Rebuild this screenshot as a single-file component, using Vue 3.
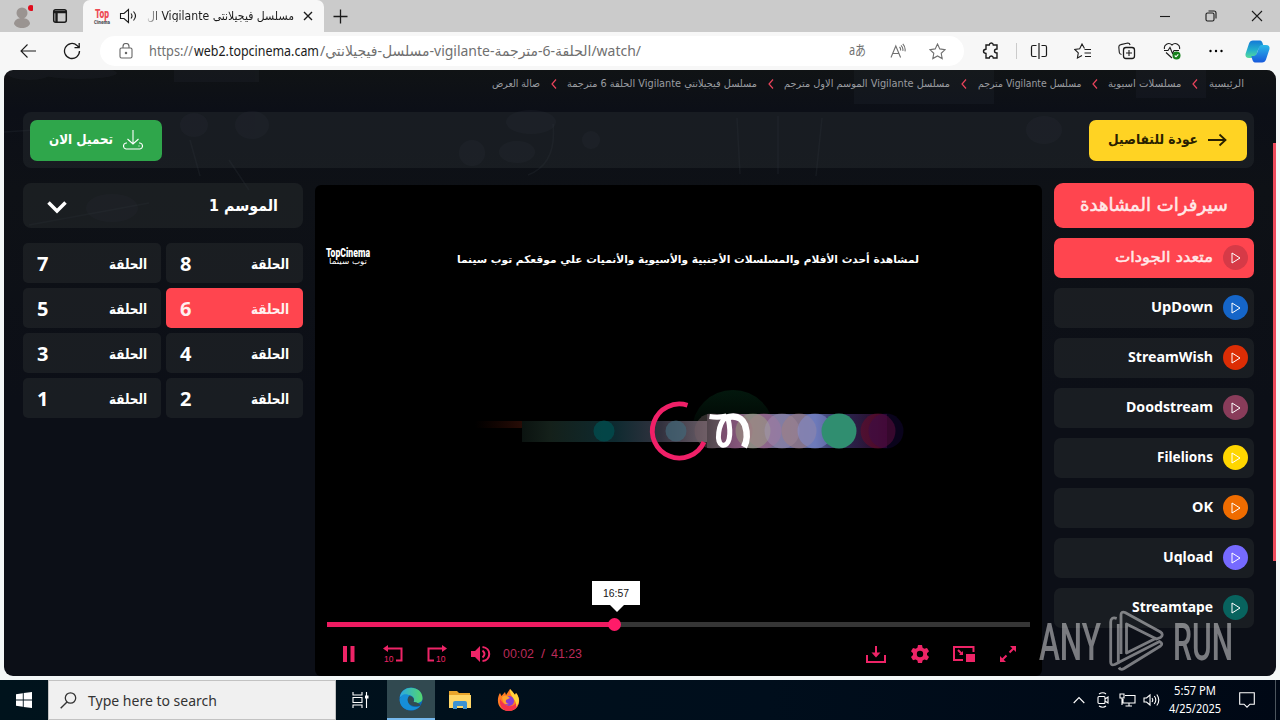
<template>
  <div class="screen">
    <header class="titlebar">
      <div class="profile">
        <svg width="22" height="24" viewBox="0 0 22 24">
          <circle cx="11" cy="9" r="5.5" fill="#9a9491" />
          <path d="M3 20c0-8 16-8 16 0-3 5.500-13 5.500-16 0z" fill="#9a9491" />
          <circle cx="20" cy="4" r="3" fill="#e00b1c" />
        </svg>
      </div>
      <div class="workspaces">
        <svg class="line" width="16" height="16" viewBox="0 0 16 16">
          <rect x="1.7" y="1.7" width="12.6" height="12.6" rx="2" stroke-width="1.5" />
          <path d="M2 4h12M4.5 4v10" stroke-width="2.4" />
        </svg>
      </div>
      <div class="tab">
        <div class="favicon">
          <FitText class="fav-top" text="Top" :width="14" :size="12" weight="900" font="Roboto" />
          <FitText text="Cinema" :width="16" :size="5" weight="900" font="Roboto" />
        </div>
        <svg class="line tab-sound" width="18" height="16" viewBox="0 0 18 16">
          <path d="M1.5 5.5H5L9.500 1.500v13L5 10.500H1.500zM12 5.500q2 2.500 0 5M14.500 3.500q4 4.500 0 9" />
        </svg>
        <FitText class="tab-title" text="مسلسل فيجيلانتي Vigilante ال" :width="147" :size="12" rtl />
        <svg class="line" width="10" height="10" viewBox="0 0 10 10"><path d="M1 1l8 8M9 1l-8 8" stroke-width="1.4" /></svg>
      </div>
      <svg class="line new-tab" width="15" height="15" viewBox="0 0 15 15"><path d="M7.500.5v14M.5 7.500h14" stroke-width="1.300" /></svg>
      <div class="window-buttons">
        <span><svg class="line" width="12" height="12" viewBox="0 0 12 12"><path d="M1 6.500h10" /></svg></span>
        <span>
          <svg class="line" width="12" height="12" viewBox="0 0 12 12">
            <rect x="1" y="3" width="8" height="8" rx="1.500" />
            <path d="M3.500 1H9q2 0 2 2v5.500" />
          </svg>
        </span>
        <span><svg class="line" width="12" height="12" viewBox="0 0 12 12"><path d="M1 1l10 10M11 1L1 11" /></svg></span>
      </div>
    </header>

    <div class="toolbar">
      <span class="tool">
        <svg class="line" width="18" height="16" viewBox="0 0 18 16"><path d="M17 8H2M8.500 1.500L2 8l6.500 6.500" /></svg>
      </span>
      <span class="tool">
        <svg class="line" width="18" height="18" viewBox="0 0 18 18"><path d="M16.500 9a7.500 7.500 0 1 1-2.500-5.600L16 5.500M16.200 1v4.700h-4.700" stroke-width="1.300" /></svg>
      </span>
      <div class="address">
        <svg class="line lock" width="14" height="16" viewBox="0 0 14 16">
          <rect x="1" y="5" width="12" height="10" rx="1.500" />
          <path d="M4 5V3.500a3 3 0 0 1 6 0V5" />
          <circle cx="7" cy="10" r=".7" />
        </svg>
        <FitText class="url-dim" text="https://" :width="44" :size="14" font="Noto Sans" />
        <FitText class="url-host" text="web2.topcinema.cam" :width="125" :size="14" font="Noto Sans" />
        <FitText class="url-dim" :text="urlPath" :width="321" :size="14" font="Noto Sans, DejaVu Sans" />
        <span class="address-icons">
          <span><FitText class="grey" text="aあ" :width="17" :size="14" font="Noto Sans, Noto Sans CJK JP" /></span>
          <span>
            <svg class="line grey" width="16" height="16" viewBox="0 0 16 16">
              <path d="M1 14.500L5.800 3l4.800 11.500M2.700 10.500h6.200M9.500 4q1.500 1.500 1 3.500M11 2.300q2.500 2.500 1.800 5.500M12.800.8q3 3.200 2.200 7.500" />
            </svg>
          </span>
          <span>
            <svg class="line grey" width="17" height="17" viewBox="0 0 17 17"><path :d="starPath" /></svg>
          </span>
        </span>
      </div>
      <span class="tool narrow">
        <svg class="line" width="18" height="18" viewBox="0 0 18 18">
          <path d="M4 3h3.300q.2-2 2-2t2 2H15v4q-2.500.1-2.500 2t2.500 2v5h-3.700q-.2-2-2-2t-2 2H4v-4.500q-2.500-.2-2.500-2.200T4 7.200z" stroke-width="1.400" />
        </svg>
      </span>
      <span class="divider"></span>
      <span class="tool">
        <svg class="line" width="18" height="16" viewBox="0 0 18 16">
          <path d="M6.500 2.500H3q-1.500 0-1.500 1.500v8q0 1.500 1.500 1.500h3.500M11.500 2.500H15q1.500 0 1.500 1.500v8q0 1.500-1.500 1.500h-3.500M9 0v16" stroke-width="1.200" />
        </svg>
      </span>
      <span class="tool">
        <svg class="line" width="18" height="17" viewBox="0 0 18 17">
          <path d="M10.500 5.600L8 1 5.700 5.700l-5 .7 3.600 3.500-.9 5L8 12.600M10.500 6.500H17M10.500 10H17M11 13.500h6" />
        </svg>
      </span>
      <span class="tool">
        <svg class="line" width="18" height="18" viewBox="0 0 18 18">
          <rect x="5.500" y="5.500" width="11" height="11" rx="2.500" stroke-width="1.300" />
          <path d="M11 8v6M8 11h6M3.500 12.500q-2-.5-2.200-2L.8 5q0-2 2-2.400l7-1.600q1.800 0 2.300 2" />
        </svg>
      </span>
      <span class="tool">
        <svg class="line" width="18" height="18" viewBox="0 0 18 18">
          <path d="M1.500 7C.5 3 5.500-.5 9 3c3.500-3.500 8.500 0 7.500 4M3 10.500l6 5.500M1 8.500h4l2-3 2.500 6 1.500-3h5" />
          <circle cx="13.500" cy="13.500" r="4" fill="#14801a" stroke="none" />
          <path d="M11.700 13.500l1.300 1.300 2.300-2.500" stroke="#fff" />
        </svg>
      </span>
      <span class="tool">
        <svg width="16" height="4" viewBox="0 0 16 4"><circle cx="2.500" cy="2" r="1.200" /><circle cx="8" cy="2" r="1.200" /><circle cx="13.500" cy="2" r="1.200" /></svg>
      </span>
      <span class="tool last">
        <svg width="25" height="23" viewBox="0 0 25 23">
          <defs>
            <linearGradient id="cp1" x1="0" y1="0" x2="0" y2="1">
              <stop offset="0" stop-color="#1379d8" />
              <stop offset=".55" stop-color="#24b0cb" />
              <stop offset="1" stop-color="#58dc9a" />
            </linearGradient>
            <linearGradient id="cp2" x1="0" y1="0" x2="0" y2="1">
              <stop offset="0" stop-color="#2bb9e8" />
              <stop offset="1" stop-color="#1759dc" />
            </linearGradient>
          </defs>
          <path d="M8 .5h7q2 0 3 4l.7 2.500H16q-2 0-3 3l-2 6q-1 2-3 2H4q-4 0-3.500-4L4 3.500q1-3 4-3z" fill="url(#cp1)" />
          <path d="M17 22.500h-7q-2 0-3-4L6.300 16H9q2 0 3-3l2-6q1-2 3-2h4q4 0 3.500 4L21 19.500q-1 3-4 3z" fill="url(#cp2)" />
        </svg>
      </span>
    </div>

    <div class="viewport">
      <main class="page">
        <svg class="backdrop" width="1272" height="606" viewBox="0 0 1272 606">
          <g fill="#59606f" opacity=".08">
            <ellipse cx="25" cy="3" rx="22" ry="7" />
            <ellipse cx="75" cy="3" rx="38" ry="6" />
            <rect x="170" y="0" width="85" height="12" />
            <ellipse cx="527" cy="52" rx="25" ry="12" />
            <ellipse cx="513" cy="82" rx="18" ry="11" />
            <circle cx="468" cy="83" r="13" />
            <circle cx="587" cy="70" r="9" />
            <ellipse cx="190" cy="55" rx="14" ry="12" />
            <ellipse cx="248" cy="55" rx="17" ry="14" />
            <ellipse cx="108" cy="138" rx="26" ry="14" />
            <ellipse cx="1040" cy="60" rx="18" ry="14" />
            <rect x="850" y="0" width="140" height="34" />
            <rect x="1132" y="0" width="70" height="28" />
          </g>
          <g stroke="#626a79" stroke-width="1.500" fill="none" opacity=".1">
            <path d="M733 48l3 56M774 46v58M818 48l-6 58M549 54q4 40-25 51M0 62l150-10M25 155l120-22M225 90l20 30M186 70l10 36" />
          </g>
        </svg>

        <nav class="breadcrumb">
          <template v-for="(crumb, i) in crumbs" :key="crumb.text">
            <span v-if="i" class="crumb-sep">
              <svg width="6" height="10" viewBox="0 0 6 10"><path d="M5 .5L1 5l4 4.500" fill="none" stroke="#e8435a" stroke-width="1.200" /></svg>
            </span>
            <FitText :text="crumb.text" :width="crumb.width" :size="10" rtl :dy="-0.5" />
          </template>
        </nav>

        <div class="action-bar">
          <a class="btn btn-back">
            <svg width="20" height="14" viewBox="0 0 20 14"><path d="M1 7h17M12.500 1.500L18.500 7l-6 5.500" fill="none" stroke="#292000" stroke-width="1.800" /></svg>
            <FitText text="عودة للتفاصيل" :width="90" :size="13.5" weight="700" rtl :dy="-0.5" />
          </a>
          <a class="btn btn-download">
            <svg width="20" height="20" viewBox="0 0 20 20">
              <path d="M10 0v13.500M4.500 9l5.500 5 5.500-5M4 13H3q-2.500.5-2.500 3T3 19h14q2.500-.5 2.500-3T17 13h-1M15.500 16h1" fill="none" stroke="#fff" stroke-width="1.100" />
            </svg>
            <FitText text="تحميل الان" :width="64" :size="13.5" weight="700" rtl :dy="-0.5" />
          </a>
        </div>

        <div class="columns">
          <aside class="servers">
            <h2 class="servers-title"><FitText text="سيرفرات المشاهدة" :width="148" :size="18" rtl :dy="-1" class="stout" /></h2>
            <div v-for="server in servers" :key="server.name" class="server" :class="{ active: server.active }">
              <span class="server-icon" :style="{ background: server.color }">
                <svg width="10" height="12" viewBox="0 0 10 12"><path d="M1 1v10l8-5z" fill="none" stroke="#fff" stroke-linejoin="round" /></svg>
              </span>
              <FitText
                :class="{ stout: server.active }"
                :text="server.name"
                :width="server.width"
                :size="15"
                :weight="server.active ? '400' : '700'"
                :rtl="server.active"
                :font="server.active ? 'DejaVu Sans' : 'Noto Sans'"
                :dy="-0.5"
              />
            </div>
          </aside>

          <section class="player">
            <svg class="scene" width="727" height="491" viewBox="0 0 727 491">
              <defs>
                <linearGradient id="streak">
                  <stop offset="0" stop-color="#0b1310" />
                  <stop offset=".15" stop-color="#14201a" />
                  <stop offset=".5" stop-color="#0e2a30" />
                  <stop offset=".75" stop-color="#33323f" />
                  <stop offset="1" stop-color="#6a5e68" />
                </linearGradient>
                <linearGradient id="band">
                  <stop offset="0" stop-color="#39363e" />
                  <stop offset=".2" stop-color="#836d80" />
                  <stop offset=".6" stop-color="#5965a0" />
                  <stop offset=".75" stop-color="#2b2751" />
                  <stop offset="1" stop-color="#2a0624" />
                </linearGradient>
                <linearGradient id="fade">
                  <stop offset="0" stop-color="#240701" stop-opacity="0" />
                  <stop offset="1" stop-color="#290d07" />
                </linearGradient>
                <linearGradient id="halo" x1="0" y1="0" x2="0" y2="1">
                  <stop offset="0" stop-color="#03180d" />
                  <stop offset=".6" stop-color="#000" />
                </linearGradient>
              </defs>
              <circle cx="418" cy="246" r="41" fill="url(#halo)" />
              <rect x="160" y="236" width="48" height="7" fill="url(#fade)" />
              <rect x="207" y="236" width="186" height="21" fill="url(#streak)" />
              <rect x="392" y="229" width="180" height="34" fill="url(#band)" />
              <circle
                v-for="(dot, i) in bokeh"
                :key="i"
                :cx="dot[0]"
                cy="246"
                :r="dot[1]"
                :fill="dot[2]"
                :opacity="dot[3]"
              />
              <g fill="none" stroke="#fff">
                <path d="M394.500 231.500q9 1.500 17-.5" stroke-width="5" />
                <path d="M410 233q15-5 20 7 4 13-1 22" stroke-width="6.500" />
                <path d="M411 232c-8 7-10 25-4 28 7 2 10-9 6-27" stroke-width="5" />
              </g>
              <path d="M372.500 220.300A27 27 0 1 0 389 257" fill="none" stroke="#f02068" stroke-width="4.800" />
            </svg>

            <div class="banner">
              <div class="brand">
                <FitText text="TopCinema" :width="44" :size="12" weight="900" font="Roboto" />
                <FitText text="توب سينما" :width="38" :size="8" rtl :dy="-2" />
              </div>
              <FitText
                text="لمشاهدة أحدث الأفلام والمسلسلات الأجنبية والأسيوية والأنميات علي موقعكم توب سينما"
                :width="462"
                :size="10.5"
                weight="700"
                rtl
                :dy="2"
              />
            </div>

            <div class="progress">
              <div class="progress-fill" :style="{ width: played + '%' }">
                <span class="knob"></span>
                <span class="tooltip"><FitText text="16:57" :width="26" :size="10" font="Liberation Sans" /></span>
              </div>
            </div>
            <div class="controls">
              <span class="control"><svg width="12" height="16" viewBox="0 0 12 16"><path d="M0 0h4v16H0zM7.500 0h4v16h-4z" /></svg></span>
              <span class="control">
                <svg width="20" height="18" viewBox="0 0 20 18">
                  <path d="M4 3.500h14.500v12H13" class="pen" /><path d="M0 3.500L5 0v7z" />
                  <text x="1" y="16.500" font-size="8.500">10</text>
                </svg>
              </span>
              <span class="control">
                <svg width="20" height="18" viewBox="0 0 20 18">
                  <path d="M16 3.500H1.500v12H7" class="pen" /><path d="M20 3.500L15 0v7z" />
                  <text x="9" y="16.500" font-size="8.500">10</text>
                </svg>
              </span>
              <span class="control">
                <svg width="20" height="16" viewBox="0 0 20 16">
                  <path d="M0 5h4l5-5v16l-5-5H0z" /><path d="M11.500 4.500q4 3.500 0 7M11.500 1c9 1 9 13 0 14" class="pen" />
                </svg>
              </span>
              <div class="time">
                <FitText text="00:02" :width="31" :size="12" font="Liberation Sans" />
                <FitText text="/" :width="4" :size="12" font="Liberation Sans" />
                <FitText text="41:23" :width="31" :size="12" font="Liberation Sans" />
              </div>
              <span class="control push">
                <svg width="20" height="17" viewBox="0 0 20 17"><path d="M1 9v7h18V9M10 0v9" class="pen" /><path d="M5.500 6.500h9L10 11.500z" /></svg>
              </span>
              <span class="control">
                <svg width="18" height="18" viewBox="0 0 18 18">
                  <path fill-rule="evenodd" d="M7 0h4l.6 2.700 1.700 1 2.700-.8 2 3.400-2 1.900v1.800l2 1.900-2 3.400-2.700-.8-1.700 1L11 18H7l-.6-2.500-1.700-1-2.700.8-2-3.400L2 10V8.200L0 6.300l2-3.400 2.700.8 1.700-1zM9 5.800a3.200 3.200 0 1 0 0 6.400 3.200 3.200 0 0 0 0-6.400z" />
                </svg>
              </span>
              <span class="control">
                <svg width="22" height="17" viewBox="0 0 22 17">
                  <path d="M20.500 6V1H1v13h9M5 4l4 4" class="pen" /><path d="M6 9h4V5zM13 8h9v8h-9z" />
                </svg>
              </span>
              <span class="control">
                <svg width="16" height="16" viewBox="0 0 16 16"><path d="M9.500 6.500l4-4M6.500 9.500l-4 4" class="pen" /><path d="M10 0h6v6zM0 10v6h6z" /></svg>
              </span>
            </div>
          </section>

          <aside class="seasons">
            <div class="season-select">
              <FitText text="الموسم 1" :width="69" :size="15.5" weight="700" rtl :dy="-0.5" />
              <svg class="season-arrow" width="20" height="13" viewBox="0 0 20 13"><path d="M1.500 1.500L10 10l8.500-8.500" fill="none" stroke="#fff" stroke-width="3.500" /></svg>
            </div>
            <div class="episodes">
              <div v-for="n in episodes" :key="n" class="episode" :class="{ active: n === 6 }">
                <FitText text="الحلقة" :width="38" :size="14" rtl weight="700" :dy="1" />
                <b>{{ n }}</b>
              </div>
            </div>
          </aside>
        </div>
        <div class="scroll-thumb"></div>
      </main>
    </div>

    <footer class="taskbar">
      <span class="start">
        <svg width="16" height="16" viewBox="0 0 16 16"><path d="M0 2.200L6.800 1.200v6.300H0zM7.700 1.100L16 0v7.500H7.700zM0 8.400h6.800v6.400L0 13.800zM7.700 8.400H16V16l-8.300-1.100z" fill="#fff" /></svg>
      </span>
      <div class="search">
        <svg class="line" width="17" height="17" viewBox="0 0 17 17"><circle cx="10.500" cy="6" r="5.200" stroke-width="1.300" /><path d="M7 10L.7 16.300" stroke-width="1.400" /></svg>
        <FitText text="Type here to search" :width="129" :size="15" font="Noto Sans" />
      </div>
      <span class="task task-view">
        <svg class="line" width="17" height="16" viewBox="0 0 17 16"><path d="M1 0v3h9V0M1 16v-3h9v3M1 5.500h9v5H1zM14.500 0v16" /><path d="M13 5h3.500" stroke-width="3" /></svg>
      </span>
      <span class="task edge">
        <svg width="24" height="24" viewBox="0 0 24 24">
          <defs>
            <linearGradient id="edgeTop"><stop offset="0" stop-color="#2aa8e5" /><stop offset="1" stop-color="#54d76d" /></linearGradient>
          </defs>
          <circle cx="12" cy="12" r="11.500" fill="#0d68bb" />
          <path d="M.7 11C2-3 23-2 23.500 11c.2 5-6 6-9 4 2-3-1-7-5-7-4-.2-8 1-8.800 3z" fill="url(#edgeTop)" />
          <path d="M.7 13C1 7 8 6 11 9c-4 2-2 8 1 10 3 2 7 1 9.500-.5C17 26 1 25 .7 13z" fill="#168ed7" />
          <path d="M10 9c-4 5 1 13 11.500 9.500l.8 1Q20 15 14.500 15c1.500-2.500-.5-6-4.500-6z" fill="#314b52" />
        </svg>
      </span>
      <span class="task">
        <svg width="22" height="18" viewBox="0 0 22 18">
          <path d="M0 0h8l2 2h11v15H0z" fill="#e9a52b" /><path d="M0 4h22v13H0z" fill="#ffd667" />
          <path d="M4 18v-6q0-2 2-2h10q2 0 2 2v6h-4v-3H8v3z" fill="#3c91d1" />
        </svg>
      </span>
      <span class="task">
        <svg width="24" height="24" viewBox="0 0 24 24">
          <path d="M12 23C0 23-1 11 3 5l1.500 3L8 4l1 3 4-6q3 3 5 6l1-2c5 5 4 18-7 18z" fill="#ff7b24" />
          <path d="M3 11c-1 9 4 12 9 12 7 0 11-6 10-12-4 8-12 11-19 0z" fill="#f5324d" />
          <path d="M13 1q3 3 5 6l1-2c4 5 4 10 0 14 2-7-7-10-6-18z" fill="#ffd43b" />
          <circle cx="12" cy="13" r="5" fill="#853bd6" />
          <path d="M5 9q4-3 8 1l-4 2q-1 3 3 4-6 2-7-7z" fill="#ffa32d" />
        </svg>
      </span>
      <div class="tray">
        <span><svg class="line" width="12" height="8" viewBox="0 0 12 8"><path d="M.7 7L6 1.500 11.300 7" /></svg></span>
        <span>
          <svg class="line" width="12" height="16" viewBox="0 0 12 16">
            <rect x="1" y="4.500" width="7" height="7" rx="1" /><path d="M8 7l3-2v6L8 9M2 2q4-2.500 7 0M2 14q4 2.500 7 0" />
          </svg>
        </span>
        <span>
          <svg class="line" width="17" height="14" viewBox="0 0 17 14"><path d="M6 2.500h10v7.500H4V6M10 10v3M6.500 13H13M1 1h4v4H1zM3 5v7" /></svg>
        </span>
        <span>
          <svg class="line" width="17" height="14" viewBox="0 0 17 14"><path d="M1 5h2.500L7 2v10L3.500 9H1zM9 5q1.500 2 0 4M11.300 3q3 4 0 8M13.800 1.500q4 5.500 0 11" /></svg>
        </span>
      </div>
      <div class="clock">
        <FitText text="5:57 PM" :width="42" :size="12" font="Noto Sans" />
        <FitText text="4/25/2025" :width="52" :size="12" font="Noto Sans" />
      </div>
      <span class="notice">
        <svg class="line" width="16" height="16" viewBox="0 0 16 16"><path d="M.7.700h14.600v11.500H11l-3 3-3-3H.7z" /></svg>
      </span>
    </footer>

    <div class="watermark">
      <FitText text="ANY" :width="62" :size="52" font="Roboto" weight="500" />
      <svg width="56" height="62" viewBox="0 0 56 62">
        <g fill="none" stroke="currentColor" stroke-width="2.800" stroke-linejoin="round">
          <path d="M7.700 8.300Q1.700 6.500 1.700 12v40q0 4 4 2.500l3.600-1.800V14" />
          <path d="M12 44V5q0-4 4-2.500l35.500 19.500q3.500 2.500 0 5.500l-4 1.500L17.500 14v29l30-15" />
          <path d="M9.500 52.500l41-21q4 2 1 4.500L15 58.500q-3.500 2-5-1" />
        </g>
      </svg>
      <FitText text="RUN" :width="60" :size="52" font="Roboto" weight="500" />
    </div>
  </div>
</template>

<script setup>
import { h } from 'vue';

// One line of text stretched to a known width
const FitText = (props) =>
  h('svg', { width: props.width, height: props.size, style: { overflow: 'visible', flex: 'none', display: 'block' } }, [
    h(
      'text',
      {
        x: props.rtl ? props.width : 0,
        y: props.size * 0.86 + (props.dy || 0),
        direction: props.rtl ? 'rtl' : 'ltr',
        textLength: props.width,
        lengthAdjust: 'spacingAndGlyphs',
        'font-size': props.size,
        'font-weight': props.weight || '400',
        'font-family': `${props.font || 'DejaVu Sans'}, DejaVu Sans, sans-serif`,
        fill: 'currentColor'
      },
      props.text
    )
  ]);
FitText.props = {
  text: String,
  width: Number,
  size: Number,
  weight: String,
  font: String,
  rtl: Boolean,
  dy: Number
};

const urlPath = '/مسلسل-فيجيلانتي-vigilante-الحلقة-6-مترجمة/watch/';
const starPath = 'M8.500 1l2.300 4.900 5.300.7-3.900 3.700 1 5.300-4.700-2.600-4.700 2.600 1-5.300L.9 6.600l5.300-.7z';

const crumbs = [
  { text: 'الرئيسية', width: 35 },
  { text: 'مسلسلات اسيوية', width: 73.5 },
  { text: 'مسلسل Vigilante مترجم', width: 103.5 },
  { text: 'مسلسل Vigilante الموسم الاول مترجم', width: 166 },
  { text: 'مسلسل فيجيلانتي Vigilante الحلقة 6 مترجمة', width: 190 },
  { text: 'صالة العرض', width: 48 }
];

const servers = [
  { name: 'متعدد الجودات', width: 98, color: '#d63a47', active: true },
  { name: 'UpDown', width: 62, color: '#1565c8' },
  { name: 'StreamWish', width: 85, color: '#dc2d05' },
  { name: 'Doodstream', width: 87, color: '#893c5a' },
  { name: 'Filelions', width: 56, color: '#ffd600' },
  { name: 'OK', width: 21, color: '#ef6c00' },
  { name: 'Uqload', width: 50, color: '#766aff' },
  { name: 'Streamtape', width: 81, color: '#08635e' }
];

const episodes = [8, 7, 6, 5, 4, 3, 2, 1];
const played = 40.9;

// x, radius, colour, opacity
const bokeh = [
  [289, 10.5, '#004f50', 0.75],
  [361, 10.5, '#416778', 0.7],
  [397, 17.5, '#776065', 0.4],
  [420, 17.5, '#8d497b', 0.55],
  [449, 17.5, '#b05f8d', 0.4],
  [438, 17.5, '#a3b781', 0.4],
  [467, 17.5, '#a59cbf', 0.4],
  [484, 17.5, '#a77f79', 0.5],
  [500, 17.5, '#8190d5', 0.5],
  [563, 17.5, '#650b29', 0.6],
  [571, 17.5, '#220a6c', 0.25],
  [524, 17.5, '#308e70', 1]
];
</script>

<style>
body {
  margin: 0;
  overflow: hidden;
}
</style>

<style scoped>
.screen {
  position: relative;
  width: 1280px;
  height: 720px;
  display: flex;
  flex-direction: column;
  overflow: hidden;
  font-family: "DejaVu Sans", sans-serif;
  color: #1b1b1b;
  background: #f3f7f7;
}

.screen * {
  box-sizing: border-box;
}

svg {
  display: block;
  flex: none;
}

.line {
  fill: none;
  stroke: currentColor;
  stroke-width: 1.1;
}

.stout {
  stroke: currentColor;
  stroke-width: 0.5;
}

.titlebar {
  height: 32px;
  display: flex;
  align-items: center;
  background: #cbcbcb;
}

.profile {
  padding-left: 11px;
  width: 52px;
}

.workspaces {
  width: 31px;
}

.tab {
  height: 32px;
  width: 241px;
  display: flex;
  align-items: center;
  padding-left: 10px;
  background: #f7f7f7;
  border-radius: 7px 7px 0 0;
}

.favicon {
  width: 18px;
  display: flex;
  flex-direction: column;
  align-items: center;
  color: #53545b;
}

.fav-top {
  color: #ee4c55;
}

.tab-sound {
  margin-left: 8px;
}

.tab-title {
  margin: 0 9px 0 10px;
  mask-image: linear-gradient(90deg, rgba(0, 0, 0, 0.15), #000 14px);
  mask-clip: no-clip;
}

.new-tab {
  margin-left: 9px;
}

.window-buttons {
  display: flex;
  margin-left: auto;
}

.window-buttons span {
  width: 46px;
  display: flex;
  justify-content: center;
}

.toolbar {
  height: 38px;
  display: flex;
  align-items: center;
  padding-left: 6px;
  background: #f7f7f7;
}

.tool {
  width: 44.2px;
  flex: none;
  display: flex;
  justify-content: center;
}

.tool.narrow {
  width: 40px;
  margin-left: 7px;
}

.tool.last {
  width: 40px;
}

.divider {
  width: 6px;
  height: 16px;
  border-right: 1px solid #cbcbcb;
}

.address {
  width: 864px;
  height: 30px;
  margin-left: 5.6px;
  padding: 0 6px 0 19px;
  display: flex;
  align-items: center;
  border-radius: 15px;
  background: #fff;
}

.lock {
  margin-right: 16px;
  color: #666;
}

.url-dim,
.grey {
  color: #707070;
}

.url-host {
  margin: 0 1px;
}

.address-icons {
  display: flex;
  margin-left: auto;
}

.address-icons span {
  width: 40px;
  display: flex;
  justify-content: center;
}

.viewport {
  height: 610px;
  padding: 0 4px 4px;
}

.page {
  position: relative;
  height: 606px;
  overflow: hidden;
  border-radius: 9px;
  background: linear-gradient(180deg, #101315 0, #0c0f17 40px, #0e1116 120px, #0c0f17 330px, #0c0f17);
  direction: rtl;
}

.backdrop {
  position: absolute;
  left: 0;
  top: 0;
}

.breadcrumb {
  position: relative;
  height: 28px;
  padding-right: 32px;
  display: flex;
  align-items: center;
  color: #9a9ca0;
}

.crumb-sep {
  width: 27.2px;
  display: flex;
  justify-content: center;
}

.action-bar {
  position: relative;
  height: 56px;
  margin: 14px 22px 0 19px;
  padding: 0 7px;
  display: flex;
  align-items: center;
  justify-content: space-between;
  border-radius: 8px;
  background: rgba(51, 56, 58, 0.32);
}

.btn {
  height: 41px;
  padding: 0 20px;
  display: flex;
  align-items: center;
  border-radius: 7px;
}

.btn-back {
  width: 158px;
  gap: 9px;
  color: #292000;
  background: #ffd323;
}

.btn-download {
  width: 132px;
  gap: 10px;
  padding-right: 19px;
  color: #fff;
  background: #2fa64b;
}

.columns {
  position: relative;
  display: flex;
  gap: 12px;
  margin: 15px 22px 0 19px;
}

.servers {
  width: 200px;
  flex: none;
  display: flex;
  flex-direction: column;
  gap: 10px;
}

.servers-title {
  height: 45px;
  margin: 0;
  display: flex;
  align-items: center;
  justify-content: center;
  border-radius: 9px;
  color: #ffe9e9;
  background: #ff454f;
}

.server {
  height: 40px;
  flex: none;
  display: flex;
  align-items: center;
  gap: 10px;
  padding: 0 6px 1px;
  border-radius: 7px;
  color: #fff;
  background: rgba(41, 46, 48, 0.46);
}

.server.active {
  color: #ffe9e9;
  background: #ff454f;
}

.server-icon {
  width: 25px;
  height: 25px;
  display: flex;
  align-items: center;
  justify-content: center;
  border-radius: 50%;
}

.player {
  position: relative;
  width: 727px;
  height: 491px;
  margin-top: 2px;
  padding: 0 12px;
  flex: none;
  display: flex;
  flex-direction: column;
  direction: ltr;
  overflow: hidden;
  border-radius: 6px;
  background: #000;
}

.scene {
  position: absolute;
  left: 0;
  top: 0;
}

.banner {
  position: relative;
  display: flex;
  align-items: center;
  gap: 87px;
  margin: 62px 0 0 -1px;
  color: #fff;
}

.brand {
  width: 44px;
  display: flex;
  flex-direction: column;
  align-items: center;
}

.progress {
  position: relative;
  height: 5px;
  margin-top: auto;
  background: #353535;
}

.progress-fill {
  position: relative;
  height: 5px;
  background: #ee1b61;
}

.knob {
  position: absolute;
  right: -6px;
  top: -4px;
  width: 13px;
  height: 13px;
  border-radius: 50%;
  background: #ff1b69;
}

.tooltip {
  position: absolute;
  right: -25px;
  bottom: 22px;
  width: 48px;
  height: 24px;
  display: flex;
  align-items: center;
  justify-content: center;
  color: #151515;
  background: #fff;
}

.tooltip::after {
  content: "";
  position: absolute;
  left: 18px;
  top: 24px;
  border: 7px solid transparent;
  border-top-color: #fff;
  border-bottom: 0;
}

.controls {
  position: relative;
  height: 44px;
  margin-top: 5px;
  display: flex;
  align-items: center;
  color: #ee2467;
}

.control {
  width: 44px;
  display: flex;
  justify-content: center;
}

.control svg {
  fill: currentColor;
  font-family: "Liberation Sans", sans-serif;
}

.control .pen {
  fill: none;
  stroke: currentColor;
  stroke-width: 2;
}

.push {
  margin-left: auto;
}

.time {
  display: flex;
  gap: 6.5px;
  color: #bb2b5a;
}

.seasons {
  width: 280px;
  flex: none;
}

.season-select {
  height: 45px;
  padding: 0 25px;
  display: flex;
  align-items: center;
  justify-content: space-between;
  border-radius: 8px;
  color: #fff;
  background: rgba(41, 46, 48, 0.46);
}

.season-arrow {
  margin: 3px 0 0 -1px;
}

.episodes {
  display: grid;
  grid-template-columns: 137px 138px;
  grid-auto-rows: 40px;
  gap: 5px;
  margin-top: 15px;
}

.episode {
  display: flex;
  align-items: center;
  justify-content: space-between;
  padding: 0 14px;
  border-radius: 5px;
  color: #fff;
  background: rgba(41, 46, 48, 0.46);
}

.episode b {
  font: 700 20px "Open Sans", sans-serif;
}

.episode.active {
  color: #fff0ef;
  background: #ff454f;
}

.scroll-thumb {
  position: absolute;
  right: 0;
  top: 73px;
  width: 3px;
  height: 418px;
  background: #ee4b5c;
}

.taskbar {
  height: 40px;
  display: flex;
  align-items: center;
  color: #fff;
  background: linear-gradient(90deg, #00131c, #000e1c 60%, #000815);
}

.start {
  width: 48px;
  display: flex;
  justify-content: center;
}

.search {
  width: 288px;
  height: 40px;
  padding-left: 11px;
  display: flex;
  align-items: center;
  gap: 11px;
  border: 1px solid #c2c2c2;
  color: #333;
  background: #f0f0f0;
}

.task {
  width: 49px;
  height: 40px;
  display: flex;
  align-items: center;
  justify-content: center;
}

.task-view {
  width: 51px;
  padding-right: 2px;
}

.edge {
  width: 48px;
  border-bottom: 2px solid #76b9ed;
  background: #314950;
}

.tray {
  display: flex;
  margin-left: auto;
}

.tray span {
  width: 24px;
  display: flex;
  align-items: center;
  justify-content: center;
}

.clock {
  width: 64px;
  display: flex;
  flex-direction: column;
  align-items: center;
  gap: 6px;
}

.notice {
  width: 49px;
  height: 40px;
  margin-right: 4px;
  padding-right: 8px;
  display: flex;
  align-items: center;
  justify-content: flex-end;
  border-right: 1px solid #4c555d;
}

.notice svg {
  margin-right: 12px;
}

.watermark {
  position: absolute;
  left: 1039px;
  top: 610px;
  height: 62px;
  display: flex;
  align-items: center;
  gap: 8px;
  color: #fff;
  opacity: 0.45;
}
</style>
